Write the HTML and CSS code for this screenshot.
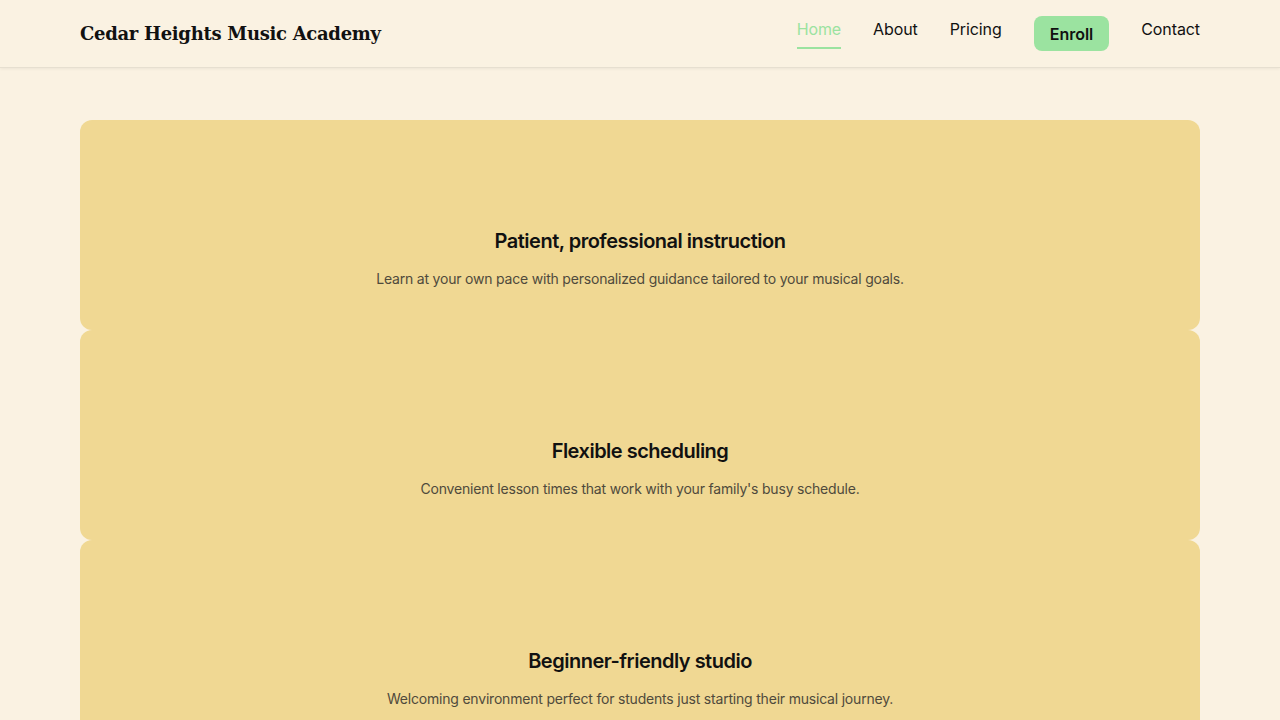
FILE: index.html
```html
<!DOCTYPE html>
<html lang="en">
<head>
<meta charset="utf-8">
<title>Cedar Heights Music Academy</title>
<link rel="stylesheet" href="styles.css">
</head>
<body>
<header class="site-header">
  <div class="header-inner">
    <div class="logo">Cedar Heights Music Academy</div>
    <nav class="nav">
      <a class="nav-link active" href="#">Home</a>
      <a class="nav-link" href="#">About</a>
      <a class="nav-link" href="#">Pricing</a>
      <a class="nav-cta" href="#">Enroll</a>
      <a class="nav-link" href="#">Contact</a>
    </nav>
  </div>
</header>
<main class="main">
  <section class="card">
    <div class="card-media"></div>
    <h2 class="card-title">Patient, professional instruction</h2>
    <p class="card-text">Learn at your own pace with personalized guidance tailored to your musical goals.</p>
  </section>
  <section class="card">
    <div class="card-media"></div>
    <h2 class="card-title">Flexible scheduling</h2>
    <p class="card-text">Convenient lesson times that work with your family's busy schedule.</p>
  </section>
  <section class="card">
    <div class="card-media"></div>
    <h2 class="card-title">Beginner-friendly studio</h2>
    <p class="card-text">Welcoming environment perfect for students just starting their musical journey.</p>
  </section>
</main>
</body>
</html>
```
FILE: styles.css
```css
* { box-sizing: border-box; }
html, body { margin: 0; padding: 0; }
body {
  background: #faf2e2;
  font-family: Inter, "Noto Sans", sans-serif;
  color: #111;
}
.site-header {
  background: #faf2e2;
  border-bottom: 1px solid #e6dfd0;
  box-shadow: 0 1px 3px rgba(0,0,0,0.06);
}
.header-inner {
  max-width: 1120px;
  margin: 0 auto;
  height: 67px;
  display: flex;
  align-items: center;
  justify-content: space-between;
}
.logo {
  font-family: "DejaVu Serif", Georgia, serif;
  font-weight: 700;
  font-size: 18px;
  letter-spacing: -0.3px;
  color: #111;
}
.nav {
  display: flex;
  align-items: center;
  gap: 32px;
}
.nav-link {
  font-size: 16px;
  line-height: 24px;
  color: #111;
  text-decoration: none;
  padding-bottom: 6px;
  border-bottom: 2px solid transparent;
  margin-top: -2px;
  letter-spacing: -0.1px;
}
.nav-link.active {
  color: #9be3a0;
  border-bottom-color: #9be3a0;
}
.nav-cta {
  background: #9be3a0;
  color: #111;
  text-decoration: none;
  font-size: 16px;
  font-weight: 600;
  line-height: 24px;
  padding: 6px 16px 5px;
  border-radius: 8px;
  margin-top: -1px;
}
.main {
  max-width: 1120px;
  margin: 52px auto 0;
  display: flex;
  flex-direction: column;
}
.card {
  background: #f0d893;
  border-radius: 12px;
  padding: 40px 32px 41px;
  text-align: center;
}
.card-media {
  height: 67px;
}
.card-title {
  margin: 0 0 13px;
  font-size: 20px;
  line-height: 28px;
  font-weight: 600;
  letter-spacing: -0.5px;
  color: #111;
}
.card-text {
  margin: 0;
  font-size: 14px;
  line-height: 21px;
  letter-spacing: -0.2px;
  color: #4f4a3c;
}
```
